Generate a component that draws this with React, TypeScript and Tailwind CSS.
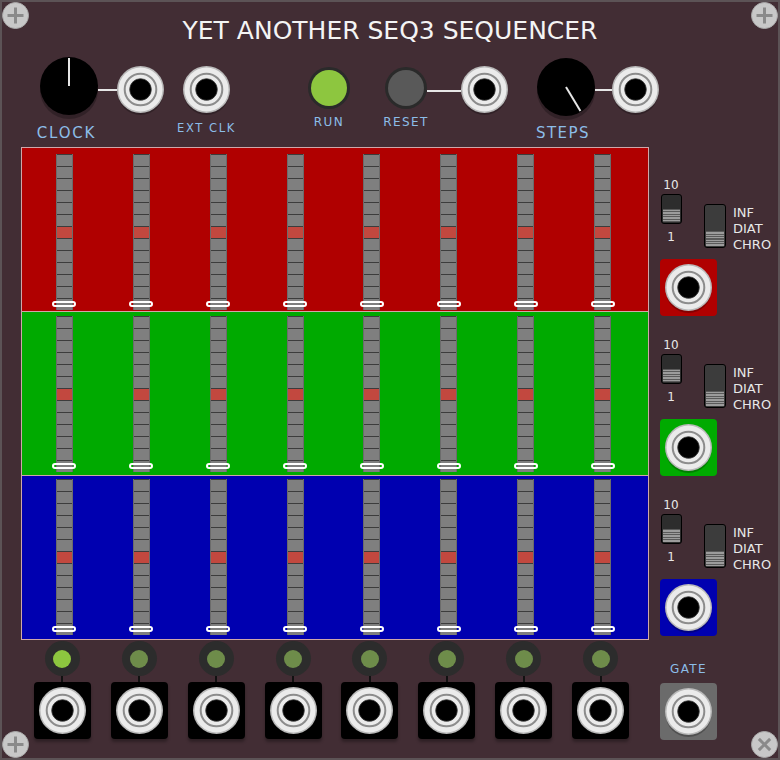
import clsx from "clsx";

const rowColors = ["bg-[#b00000]", "bg-[#00aa00]", "bg-[#0000b0]"];
const rowPad = ["pt-[6px] pb-[1px]", "pt-[4px] pb-[3px]", "pt-[3px] pb-[4px]"];
const leds = [true, false, false, false, false, false, false, false];

function Jack() {
  return (
    <svg width="47" height="47" viewBox="0 0 47 47" className="overflow-visible">
      <circle cx="23.5" cy="26" r="23" fill="rgba(0,0,0,0.25)" />
      <circle cx="23.5" cy="23.5" r="23.5" fill="#b9b9b9" />
      <circle cx="23.5" cy="23.5" r="22" fill="#ebebeb" />
      <circle cx="23.5" cy="23.5" r="15.8" fill="none" stroke="#8c8c8c" strokeWidth="2" />
      <circle cx="23.5" cy="23.5" r="10.8" fill="#000" stroke="#3a3a3a" strokeWidth="0.8" />
    </svg>
  );
}

function Knob({ angle }: { angle: number }) {
  const rad = (angle * Math.PI) / 180;
  const x2 = 29 + 28 * Math.sin(rad);
  const y2 = 29 - 28 * Math.cos(rad);
  return (
    <svg width="58" height="58" viewBox="0 0 58 58" className="overflow-visible">
      <circle cx="29" cy="33" r="29" fill="rgba(0,0,0,0.25)" />
      <circle cx="29" cy="29" r="29" fill="#000" />
      <line x1="29" y1="29" x2={x2} y2={y2} stroke="#e6e6e6" strokeWidth="2" />
    </svg>
  );
}

function Screw({ cross }: { cross?: boolean }) {
  return (
    <svg width="27" height="27" viewBox="0 0 27 27">
      <circle cx="13.5" cy="13.5" r="13" fill="#c8c8c8" stroke="#a9a9a9" />
      <g transform={cross ? "rotate(45 13.5 13.5)" : undefined} stroke="#8a8a8a" strokeWidth="3">
        <line x1="5.5" y1="13.5" x2="21.5" y2="13.5" />
        <line x1="13.5" y1="5.5" x2="13.5" y2="21.5" />
      </g>
    </svg>
  );
}

function Slider() {
  return (
    <div className="relative flex w-[17px] flex-col border-x border-[#6b6b6b] bg-[#7f7f7f]">
      {Array.from({ length: 13 }).map((_, i) => (
        <div
          key={i}
          className={clsx("h-[12px] border-t border-[#3c3c3c]", i === 6 && "bg-[#c2483f]")}
        />
      ))}
      <div className="absolute left-1/2 top-[147px] h-[6px] w-[24px] -translate-x-1/2 rounded-full border-2 border-white" />
    </div>
  );
}

function RowControls({ color }: { color: string }) {
  return (
    <div className="flex flex-col">
      <div className="flex items-start">
        <div className="flex w-[22px] flex-col items-center text-[12px] leading-[14px] text-[#e8e8e8]">
          <span>10</span>
          <div className="mt-[2px] flex h-[30px] w-[21px] flex-col rounded-[3px] border-[1.5px] border-black bg-[#2d2d2d] px-[1px] pb-[1px]">
            <div className="mt-auto h-[13px] bg-[repeating-linear-gradient(to_bottom,#5a5a5a_0px,#5a5a5a_1px,#9c9c9c_1px,#9c9c9c_2.5px)]" />
          </div>
          <span className="mt-[6px]">1</span>
        </div>
        <div className="ml-[22px] mt-[26px] flex h-[44px] w-[22px] flex-col rounded-[3px] border-[1.5px] border-black bg-[#3c3c3c] px-[1px] pb-[1px]">
          <div className="mt-auto h-[15px] bg-[repeating-linear-gradient(to_bottom,#5a5a5a_0px,#5a5a5a_1px,#9c9c9c_1px,#9c9c9c_2.5px)]" />
        </div>
        <div className="ml-[7px] mt-[27px] flex flex-col text-[13px] leading-[16px] text-[#e8e8e8]">
          <span>INF</span>
          <span>DIAT</span>
          <span>CHRO</span>
        </div>
      </div>
      <div className={clsx("mt-[6px] flex h-[57px] w-[57px] items-center justify-center rounded-[4px]", color)}>
        <Jack />
      </div>
    </div>
  );
}

export default function App() {
  return (
    <div className="relative flex h-[760px] w-[780px] flex-col overflow-hidden bg-[#422d34] font-['DejaVu_Sans',sans-serif] shadow-[inset_0_0_0_2px_#5c5356]">
      <div className="absolute left-[2px] top-[2px]"><Screw /></div>
      <div className="absolute right-[2px] top-[2px]"><Screw /></div>
      <div className="absolute bottom-[2px] left-[2px]"><Screw /></div>
      <div className="absolute bottom-[2px] right-[2px]"><Screw cross /></div>

      <h1 className="mt-[16px] text-center text-[25px] leading-[30px] text-[#f4f4f4]">
        YET ANOTHER SEQ3 SEQUENCER
      </h1>

      {/* top controls */}
      <div className="flex h-[101px] items-start text-[#8cbde8]">
        <div className="ml-[40px] mt-[11px] flex w-[58px] flex-col items-center">
          <Knob angle={0} />
          <span className="mr-[5px] mt-[9px] whitespace-nowrap text-[15px] leading-[18px] tracking-[1.8px]">CLOCK</span>
        </div>
        <div className="mt-[43px] h-[2px] w-[19px] bg-[#e6e6e6]" />
        <div className="mt-[20px]"><Jack /></div>
        <div className="ml-[19px] mt-[20px] flex w-[47px] flex-col items-center">
          <Jack />
          <span className="mt-[8px] whitespace-nowrap text-[11.5px] leading-[14px] tracking-[1.6px]">EXT CLK</span>
        </div>
        <div className="ml-[78px] mt-[21px] flex w-[42px] flex-col items-center">
          <div className="flex h-[42px] w-[42px] items-center justify-center rounded-full bg-[#2a2a2a]">
            <div className="h-[36px] w-[36px] rounded-full bg-[#8dc63f]" />
          </div>
          <span className="mt-[6px] text-[12px] leading-[14px] tracking-[1.4px]">RUN</span>
        </div>
        <div className="ml-[35px] mt-[21px] flex w-[42px] flex-col items-center">
          <div className="flex h-[42px] w-[42px] items-center justify-center rounded-full bg-[#2a2a2a]">
            <div className="h-[36px] w-[36px] rounded-full bg-[#595959]" />
          </div>
          <span className="mt-[6px] text-[12px] leading-[14px] tracking-[1.4px]">RESET</span>
        </div>
        <div className="mt-[44px] h-[2px] w-[34px] bg-[#e6e6e6]" />
        <div className="mt-[20px]"><Jack /></div>
        <div className="ml-[29px] mt-[12px] flex w-[58px] flex-col items-center">
          <Knob angle={149} />
          <span className="mr-[6px] mt-[8px] whitespace-nowrap text-[15px] leading-[18px] tracking-[1.5px]">STEPS</span>
        </div>
        <div className="mt-[43px] h-[2px] w-[17px] bg-[#e6e6e6]" />
        <div className="mt-[20px]"><Jack /></div>
      </div>

      {/* sequencer grid + row controls */}
      <div className="flex h-[493px] items-start">
        <div className="ml-[21px] flex w-[628px] flex-col divide-y divide-[#cfa7a9] border border-[#cfa7a9]">
          {rowColors.map((c, r) => (
            <div key={r} className={clsx("grid grid-cols-8 pl-[4px] pr-[7px]", c, rowPad[r])}>
              {Array.from({ length: 8 }).map((_, i) => (
                <div key={i} className="flex justify-center">
                  <Slider />
                </div>
              ))}
            </div>
          ))}
        </div>
        <div className="ml-[11px] flex flex-col gap-[22px] pt-[31px]">
          <RowControls color="bg-[#b00000]" />
          <RowControls color="bg-[#00aa00]" />
          <RowControls color="bg-[#0000b0]" />
        </div>
      </div>

      {/* gate outputs */}
      <div className="flex items-start">
        <div className="ml-[24px] grid w-[615px] grid-cols-8">
          {leds.map((on, i) => (
            <div key={i} className="flex flex-col items-center">
              <div className="mt-[1px] flex h-[35px] w-[35px] items-center justify-center rounded-full bg-[#2c2c2c]">
                <div className={clsx("h-[18px] w-[18px] rounded-full", on ? "bg-[#8dc63f]" : "bg-[#6e8c4a]")} />
              </div>
              <div className="h-[6px] w-[2px] bg-[#111]" />
              <div className="flex h-[57px] w-[57px] items-center justify-center rounded-[4px] bg-black shadow-[0_3px_3px_rgba(0,0,0,0.3)]">
                <Jack />
              </div>
            </div>
          ))}
        </div>
        <div className="ml-[21px] flex w-[57px] flex-col items-center">
          <span className="mt-[22px] text-[12px] leading-[14px] tracking-[1.4px] text-[#8cbde8]">GATE</span>
          <div className="mt-[7px] flex h-[57px] w-[57px] items-center justify-center rounded-[4px] bg-[#6b6b6b]">
            <Jack />
          </div>
        </div>
      </div>
    </div>
  );
}
